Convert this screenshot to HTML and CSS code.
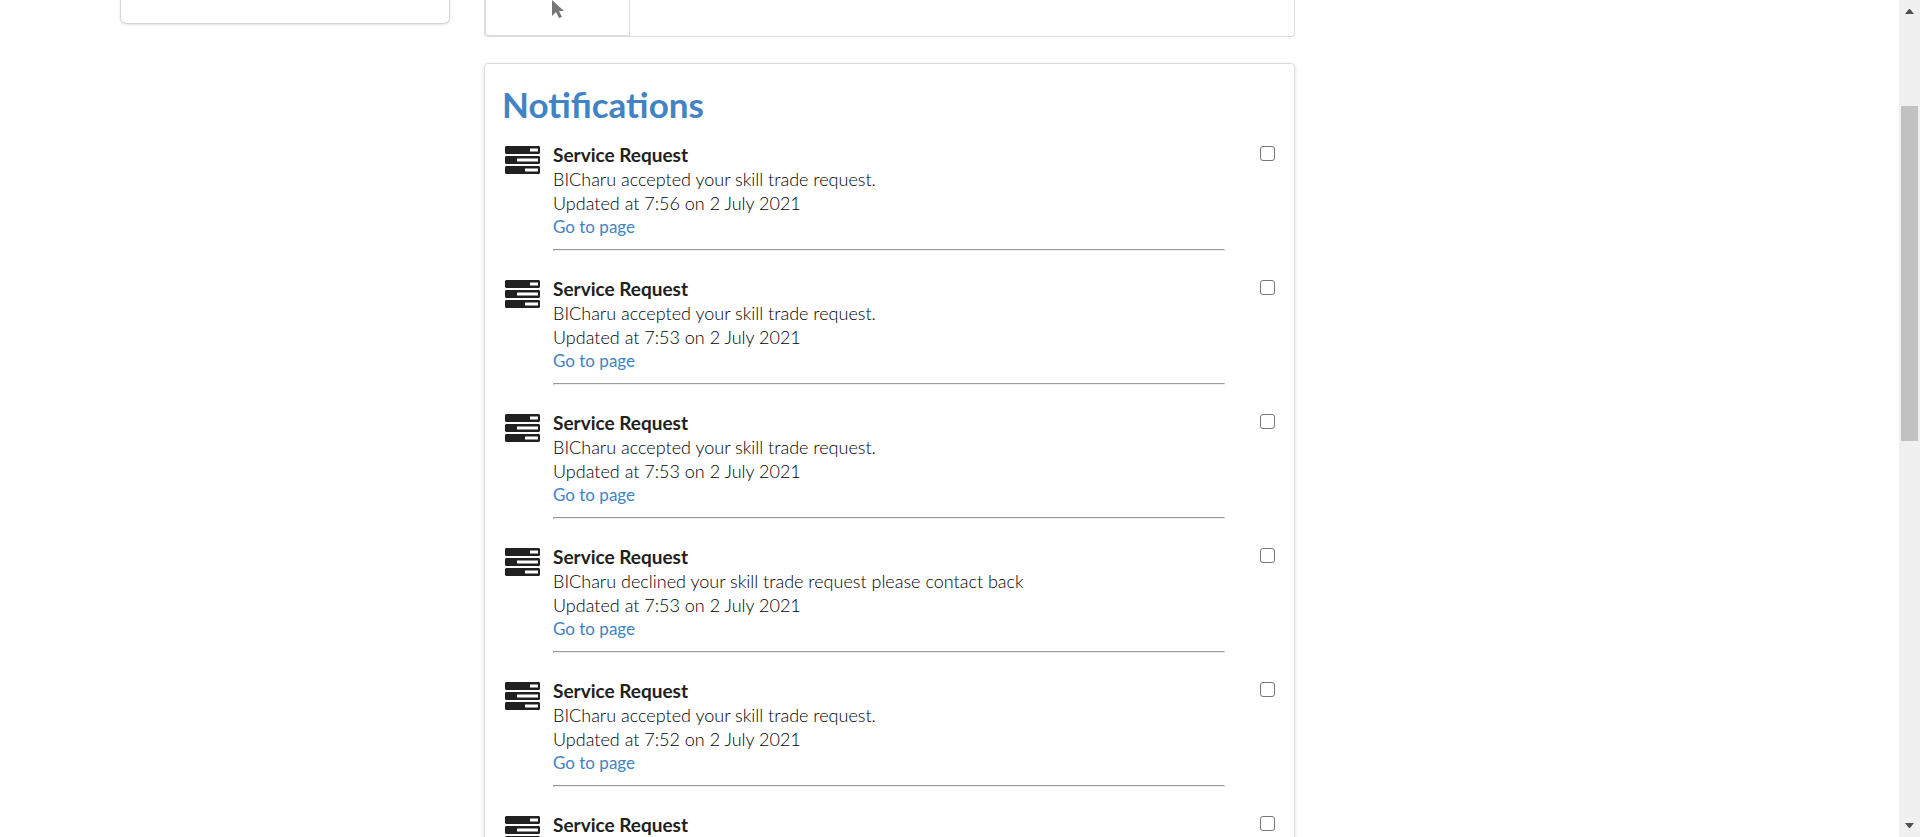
FILE: index.html
```
<!DOCTYPE html>
<html lang="en">
<head>
<meta charset="utf-8">
<title>Notifications</title>
<link rel="stylesheet" href="styles.css">
</head>
<body>
<svg class="defs" aria-hidden="true">
  <symbol id="tasks" viewBox="0 0 35 28">
    <path fill="currentColor" fill-rule="evenodd" d="M1 0h33l1 1v6l-1 1H1L0 7V1zM25 2.500v3h8v-3zM1 10h33l1 1v6l-1 1H1l-1-1v-6zM12 12.500v3h21v-3zM1 20h33l1 1v6l-1 1H1l-1-1v-6zM20 22.500v3h13v-3z"/>
  </symbol>
  <symbol id="pointer" viewBox="0 0 12 18">
    <path fill="currentColor" d="M0 0v16l4-4 3 6 3-1-3-6h5z"/>
  </symbol>
</svg>
<div class="window">
  <main class="page">
    <aside class="profile-card"></aside>
    <div class="content">
      <nav class="tabs"><button class="tab" aria-label="Select"><svg class="pointer"><use href="#pointer"/></svg></button></nav>
      <section class="notifications">
        <h1 class="heading">Notifications</h1>
        <ul class="list">
          <li class="item">
            <svg class="icon"><use href="#tasks"/></svg>
            <div class="body"><label class="title" for="n1">Service Request</label><p class="text">BICharu accepted your skill trade request.</p><p class="text">Updated at 7:56 on 2 July 2021</p><a class="link" href="#">Go to page</a><hr class="rule"></div>
            <input class="check" type="checkbox" id="n1">
          </li>
          <li class="item">
            <svg class="icon"><use href="#tasks"/></svg>
            <div class="body"><label class="title" for="n2">Service Request</label><p class="text">BICharu accepted your skill trade request.</p><p class="text">Updated at 7:53 on 2 July 2021</p><a class="link" href="#">Go to page</a><hr class="rule"></div>
            <input class="check" type="checkbox" id="n2">
          </li>
          <li class="item">
            <svg class="icon"><use href="#tasks"/></svg>
            <div class="body"><label class="title" for="n3">Service Request</label><p class="text">BICharu accepted your skill trade request.</p><p class="text">Updated at 7:53 on 2 July 2021</p><a class="link" href="#">Go to page</a><hr class="rule"></div>
            <input class="check" type="checkbox" id="n3">
          </li>
          <li class="item">
            <svg class="icon"><use href="#tasks"/></svg>
            <div class="body"><label class="title" for="n4">Service Request</label><p class="text">BICharu declined your skill trade request please contact back</p><p class="text">Updated at 7:53 on 2 July 2021</p><a class="link" href="#">Go to page</a><hr class="rule"></div>
            <input class="check" type="checkbox" id="n4">
          </li>
          <li class="item">
            <svg class="icon"><use href="#tasks"/></svg>
            <div class="body"><label class="title" for="n5">Service Request</label><p class="text">BICharu accepted your skill trade request.</p><p class="text">Updated at 7:52 on 2 July 2021</p><a class="link" href="#">Go to page</a><hr class="rule"></div>
            <input class="check" type="checkbox" id="n5">
          </li>
          <li class="item">
            <svg class="icon"><use href="#tasks"/></svg>
            <div class="body"><label class="title" for="n6">Service Request</label></div>
            <input class="check" type="checkbox" id="n6">
          </li>
        </ul>
      </section>
    </div>
  </main>
  <div class="scrollbar" aria-hidden="true">
    <svg class="arrow" viewBox="0 0 9 5"><path fill="currentColor" d="M0 5h9L5 0H4z"/></svg>
    <div class="track"><div class="thumb"></div></div>
    <svg class="arrow" viewBox="0 0 9 5"><path fill="currentColor" d="M0 0h9L5 5H4z"/></svg>
  </div>
</div>
</body>
</html>
```
FILE: styles.css
```
* { box-sizing: border-box; }
body {
  margin: 0;
  background: #fff;
  color: #212121;
  font: 18px/24px Lato, "Liberation Sans", sans-serif;
}
.defs { display: none; }
.window { display: flex; height: 100vh; overflow: hidden; }
.page {
  flex: 1;
  display: grid;
  grid-template-columns: 330fr 811fr;
  column-gap: 34px;
  align-items: start;
  padding: 0 604px 0 120px;
}
.profile-card {
  height: 24px;
  border: 1px solid #d4d4d5;
  border-top: 0;
  border-radius: 0 0 6px 6px;
  box-shadow: 0 1px 3px #e4e4e5;
}
.tabs {
  display: flex;
  height: 37px;
  border: 1px solid #dcddde;
  border-top: 0;
  border-radius: 0 0 4px 4px;
}
.tab {
  width: 145px;
  padding: 0;
  border: 1px solid #dcddde;
  border-top: 0;
  border-radius: 0 0 0 4px;
  background: #fff;
  color: #767676;
  display: flex;
  justify-content: center;
  align-items: flex-start;
}
.pointer { width: 12px; height: 18px; }
.notifications {
  margin-top: 26px;
  padding: 20px 19px;
  border: 1px solid #dcddde;
  border-radius: 4px;
  box-shadow: 0 1px 4px #dcddde;
}
.heading {
  margin: 0 -2px 19px;
  color: #4183c4;
  font-size: 35px;
  line-height: 40px;
  font-weight: 700;
}
.list { margin: 0; padding: 0; list-style: none; }
.item {
  display: grid;
  grid-template-columns: 36px 1fr 15px;
  align-items: start;
  padding-bottom: 26px;
}
.icon { width: 35px; height: 28px; margin-top: 3px; justify-self: end; }
.body { margin: 0 35px 0 13px; }
.title { display: block; font-size: 19px; font-weight: 700; }
.text { margin: 0; color: #000; font-weight: 300; }
.link { display: block; color: #4183c4; font-size: 17px; text-decoration: none; }
.rule { margin: 10px 0 0; border: 1px solid; border-color: #9a9a9a #eee #eee #9a9a9a; }
.check {
  appearance: none;
  width: 15px;
  height: 15px;
  margin: 3px 0 0;
  border: 1px solid #767676;
  border-radius: 3px;
  background: #fff;
}
.scrollbar {
  width: 21px;
  padding: 9px 2px;
  display: flex;
  flex-direction: column;
  align-items: center;
  background: #f0f0f0;
  color: #505050;
}
.arrow { width: 9px; height: 5px; }
.track {
  flex: 1;
  align-self: stretch;
  display: grid;
  grid-template-rows: 92fr 335fr 382fr;
}
.thumb { grid-row: 2; background: #c1c1c1; }
```
